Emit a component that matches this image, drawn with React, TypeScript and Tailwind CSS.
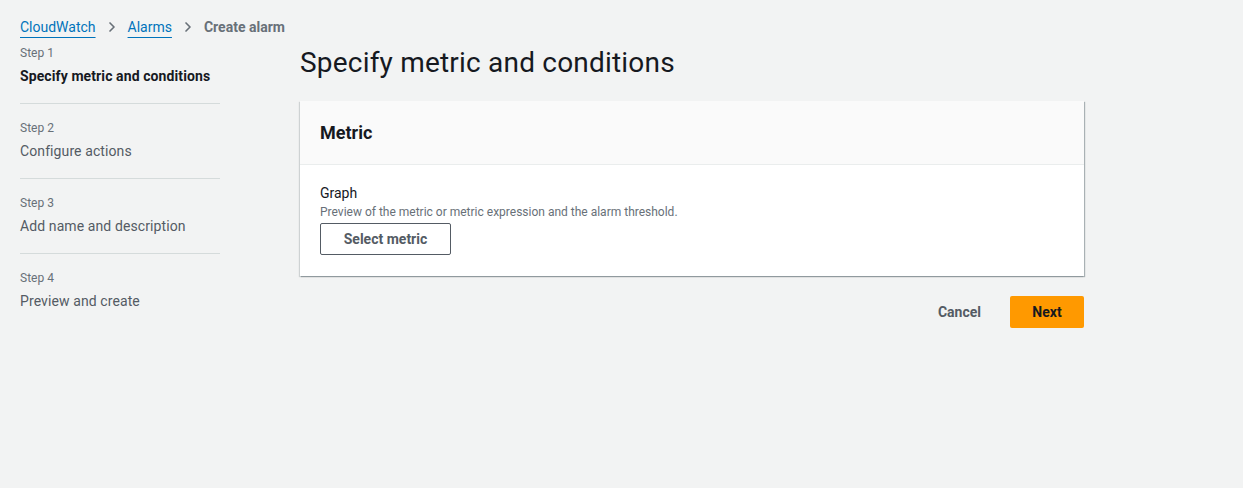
import { ChevronRight } from 'lucide-react';

const steps = [
  { n: 1, title: 'Specify metric and conditions', active: true },
  { n: 2, title: 'Configure actions', active: false },
  { n: 3, title: 'Add name and description', active: false },
  { n: 4, title: 'Preview and create', active: false },
];

export default function App() {
  return (
    <div
      className="min-h-[488px] w-full bg-[#f2f3f3] text-[#16191f]"
      style={{ fontFamily: 'Roboto, "Noto Sans", Arial, sans-serif' }}
    >
      {/* breadcrumbs */}
      <nav className="flex items-center px-5 pt-[15px] h-[38px] text-[14px] leading-5">
        <a className="text-[#0073bb] underline underline-offset-[5px] decoration-1">CloudWatch</a>
        <ChevronRight size={16} strokeWidth={2.5} className="mx-[8px] text-[#687078]" />
        <a className="text-[#0073bb] underline underline-offset-[5px] decoration-1">Alarms</a>
        <ChevronRight size={16} strokeWidth={2.5} className="mx-[8px] text-[#687078]" />
        <span className="font-bold text-[#687078]">Create alarm</span>
      </nav>

      <div className="flex px-5">
        {/* wizard steps */}
        <ol className="w-[200px] shrink-0 pt-[7px]">
          {steps.map((s, i) => (
            <li
              key={s.n}
              className={`pb-[17px] ${i < steps.length - 1 ? 'border-b border-[#d5dbdb] mb-[16px]' : ''}`}
            >
              <div className="text-[12px] leading-4 text-[#687078]">Step {s.n}</div>
              <div
                className={`mt-[5px] text-[14px] leading-5 tracking-[0.1px] ${
                  s.active ? 'font-bold text-[#16191f]' : 'text-[#545b64]'
                }`}
              >
                {s.title}
              </div>
            </li>
          ))}
        </ol>

        {/* main content */}
        <main className="ml-[80px] w-[784px]">
          <h1 className="text-[28px] leading-9 font-normal mt-[7px] mb-[20px] text-[#16191f] tracking-[0.2px]">
            Specify metric and conditions
          </h1>

          <section className="bg-white shadow-[1px_1px_1px_0_rgba(0,28,36,0.3),-1px_1px_1px_0_rgba(0,28,36,0.15)]">
            <div className="h-[64px] bg-[#fafafa] border-b border-[#eaeded] px-5 flex items-center">
              <h2 className="text-[18px] font-bold leading-[22px]">Metric</h2>
            </div>
            <div className="px-5 pt-[18px] pb-[21px]">
              <div className="text-[14px] leading-5">Graph</div>
              <div className="text-[12px] leading-4 text-[#687078] mt-[1px]">
                Preview of the metric or metric expression and the alarm threshold.
              </div>
              <button className="mt-[3px] h-[32px] w-[131px] border border-[#545b64] rounded-[2px] bg-white text-[14px] font-bold text-[#545b64]">
                Select metric
              </button>
            </div>
          </section>

          <div className="flex justify-end items-center mt-[20px]">
            <button className="h-[32px] px-5 text-[14px] font-bold text-[#545b64] mr-[9px]">Cancel</button>
            <button className="h-[32px] w-[74px] rounded-[2px] bg-[#ff9900] text-[14px] font-bold text-[#16191f]">
              Next
            </button>
          </div>
        </main>
      </div>
    </div>
  );
}
